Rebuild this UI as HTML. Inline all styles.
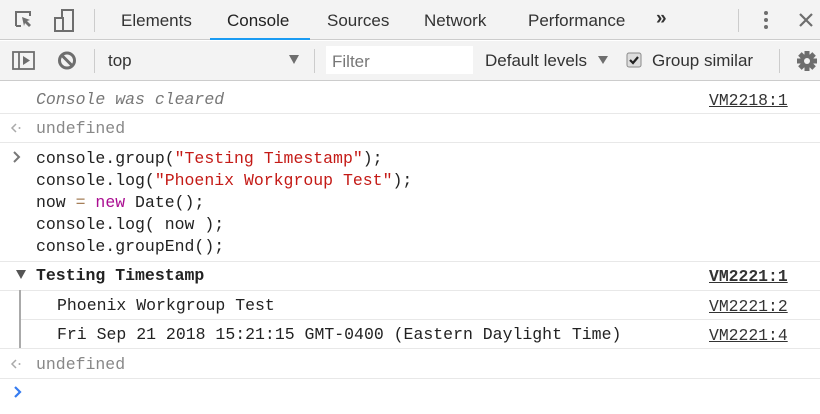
<!DOCTYPE html>
<html><head><meta charset="utf-8"><style>
*{margin:0;padding:0;box-sizing:border-box}
body{width:820px;height:414px;overflow:hidden;background:#fff;font-family:"Liberation Sans",sans-serif;position:relative;color:#333}
.a{position:absolute;white-space:pre}
.tb{position:absolute;left:0;width:820px;background:#f3f3f3}
.ui{font-size:17px;color:#333}
.m{font-family:"Liberation Mono",monospace;font-size:16.5px;color:#222}
.hl{position:absolute;left:0;width:820px;height:1px;background:#e8e8e8}
.lnk{color:#333;text-decoration:underline;font-family:"Liberation Mono",monospace;font-size:16.4px}
</style></head><body>
<div class="tb" style="top:0;height:40px;border-bottom:1px solid #ccc"></div>
<div class="tb" style="top:41px;height:40px;border-bottom:1px solid #ccc"></div>
<svg class="a" style="left:12px;top:8px" width="70" height="26" viewBox="0 0 70 26">
<path d="M4 18V4h14v4M4 18h5" fill="none" stroke="#6e6e6e" stroke-width="2"/>
<path d="M10 9l8 3-3 1 4 4-2 2-4-4-1 3z" fill="#6e6e6e"/>
<rect x="50" y="2" width="11" height="21" fill="none" stroke="#6e6e6e" stroke-width="2"/>
<rect x="43" y="10" width="8" height="13" fill="#f3f3f3" stroke="#6e6e6e" stroke-width="2"/>
</svg>
<div class="a" style="left:94px;top:9px;width:1px;height:23px;background:#ccc"></div>
<div class="a ui" style="left:121px;top:11px">Elements</div>
<div class="a ui" style="left:227px;top:11px;color:#222">Console</div>
<div class="a" style="left:210px;top:38px;width:100px;height:2px;background:#1a9bf2"></div>
<div class="a ui" style="left:327px;top:11px">Sources</div>
<div class="a ui" style="left:424px;top:11px">Network</div>
<div class="a ui" style="left:528px;top:11px">Performance</div>
<div class="a ui" style="left:656px;top:8px;font-size:19px;font-weight:bold">»</div>
<div class="a" style="left:738px;top:9px;width:1px;height:23px;background:#ccc"></div>
<div class="a" style="left:764px;top:11px;width:4px;height:4px;border-radius:2px;background:#6e6e6e;box-shadow:0 7px 0 #6e6e6e,0 14px 0 #6e6e6e"></div>
<svg class="a" style="left:798px;top:12px" width="16" height="16"><path d="M2 2L14 14M14 2L2 14" stroke="#6e6e6e" stroke-width="2.2"/></svg>
<svg class="a" style="left:12px;top:50px" width="70" height="22" viewBox="0 0 70 22">
<rect x="1" y="2" width="21" height="17" fill="none" stroke="#6e6e6e" stroke-width="1.8"/>
<line x1="7" y1="2" x2="7" y2="19" stroke="#6e6e6e" stroke-width="1.8"/>
<path d="M11 6v9l7-4.5z" fill="#6e6e6e"/>
<circle cx="55" cy="10.5" r="7.5" fill="none" stroke="#6e6e6e" stroke-width="3"/>
<line x1="50" y1="5.5" x2="60" y2="15.5" stroke="#6e6e6e" stroke-width="3"/>
</svg>
<div class="a" style="left:94px;top:49px;width:1px;height:24px;background:#ccc"></div>
<div class="a ui" style="left:108px;top:51px">top</div>
<div class="a" style="left:289px;top:55px;border-left:5.5px solid transparent;border-right:5.5px solid transparent;border-top:9px solid #6e6e6e"></div>
<div class="a" style="left:314px;top:49px;width:1px;height:24px;background:#ccc"></div>
<div class="a" style="left:326px;top:46px;width:147px;height:28px;background:#fff"></div>
<div class="a ui" style="left:332px;top:52px;color:#777">Filter</div>
<div class="a ui" style="left:485px;top:51px">Default levels</div>
<div class="a" style="left:598px;top:56px;border-left:5px solid transparent;border-right:5px solid transparent;border-top:8px solid #6e6e6e"></div>
<svg class="a" style="left:626px;top:52px" width="16" height="16"><rect x="1" y="1" width="14" height="14" rx="2" fill="#ddd" stroke="#8a8a8a"/><path d="M4 8l3 3 5-6" fill="none" stroke="#222" stroke-width="2.2"/></svg>
<div class="a ui" style="left:652px;top:51px">Group similar</div>
<div class="a" style="left:779px;top:49px;width:1px;height:24px;background:#ccc"></div>
<svg class="a" style="left:796px;top:50px" width="22" height="22" viewBox="0 0 22 22"><g fill="#6e6e6e" transform="translate(11 11)"><circle r="7"/><rect x="-2.5" y="-10" width="5" height="20"/><rect x="-2.5" y="-10" width="5" height="20" transform="rotate(45)"/><rect x="-2.5" y="-10" width="5" height="20" transform="rotate(90)"/><rect x="-2.5" y="-10" width="5" height="20" transform="rotate(135)"/></g><circle cx="11" cy="11" r="3" fill="#f3f3f3"/></svg>
<div class="a m" style="left:36px;top:90px;font-style:italic;color:#777">Console was cleared</div>
<div class="a lnk" style="left:709px;top:91px">VM2218:1</div>
<div class="hl" style="top:113px"></div>
<svg class="a" style="left:10px;top:122px" width="12" height="12"><path d="M6 2L2 6l4 4" fill="none" stroke="#aaa" stroke-width="1.5"/><circle cx="9.5" cy="6" r="1" fill="#aaa"/></svg>
<div class="a m" style="left:36px;top:119px;color:#888">undefined</div>
<div class="hl" style="top:142px"></div>
<svg class="a" style="left:12px;top:151px" width="10" height="12"><path d="M2 1l5 5-5 5" fill="none" stroke="#777" stroke-width="2"/></svg>
<div class="a m" style="left:36px;top:148px;line-height:22px">console.group(<span style="color:#c41a16">"Testing Timestamp"</span>);
console.log(<span style="color:#c41a16">"Phoenix Workgroup Test"</span>);
now <span style="color:#a67f59">=</span> <span style="color:#aa0d91">new</span> Date();
console.log( now );
console.groupEnd();</div>
<div class="hl" style="top:261px"></div>
<div class="a" style="left:16px;top:270px;border-left:5.5px solid transparent;border-right:5.5px solid transparent;border-top:9px solid #555"></div>
<div class="a m" style="left:36px;top:266px;font-weight:bold">Testing Timestamp</div>
<div class="a lnk" style="left:709px;top:267px;font-weight:bold">VM2221:1</div>
<div class="hl" style="top:290px"></div>
<div class="a" style="left:19px;top:290px;width:2px;height:58px;background:#aaa"></div>
<div class="a m" style="left:57px;top:296px">Phoenix Workgroup Test</div>
<div class="a lnk" style="left:709px;top:297px">VM2221:2</div>
<div class="hl" style="top:319px;left:21px"></div>
<div class="a m" style="left:57px;top:325px">Fri Sep 21 2018 15:21:15 GMT-0400 (Eastern Daylight Time)</div>
<div class="a lnk" style="left:709px;top:326px">VM2221:4</div>
<div class="hl" style="top:348px"></div>
<svg class="a" style="left:10px;top:358px" width="12" height="12"><path d="M6 2L2 6l4 4" fill="none" stroke="#aaa" stroke-width="1.5"/><circle cx="9.5" cy="6" r="1" fill="#aaa"/></svg>
<div class="a m" style="left:36px;top:355px;color:#888">undefined</div>
<div class="hl" style="top:378px"></div>
<svg class="a" style="left:13px;top:386px" width="10" height="12"><path d="M2 1l5 5-5 5" fill="none" stroke="#367cf1" stroke-width="2.2"/></svg>
</body></html>
